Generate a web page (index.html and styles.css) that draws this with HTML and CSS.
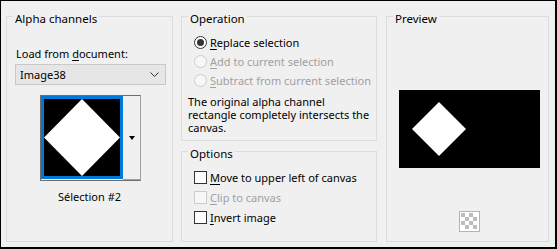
FILE: index.html
```html
<!DOCTYPE html>
<html>
<head>
<meta charset="utf-8">
<link rel="stylesheet" href="styles.css">
</head>
<body>
<div class="dialog">
  <fieldset class="group group-alpha">
    <legend>Alpha channels</legend>
    <div class="load-label">Load from <u>d</u>ocument:</div>
    <div class="combo">
      <span class="combo-text">Image38</span>
      <svg class="chevron" width="9" height="5" viewBox="0 0 9 5"><polyline points="0.5,0.5 4.5,4.5 8.5,0.5" fill="none" stroke="#333" stroke-width="1"/></svg>
    </div>
    <div class="thumb">
      <div class="thumb-img">
        <svg width="76" height="77" viewBox="0 0 76 77"><rect width="76" height="77" fill="#000"/><polygon points="38,0 76,38.5 38,77 0,38.5" fill="#fff"/></svg>
      </div>
      <div class="thumb-btn"><span class="tri"></span></div>
    </div>
    <div class="thumb-name">Sélection #2</div>
  </fieldset>

  <div class="mid-col">
    <fieldset class="group group-op">
      <legend>Operation</legend>
      <div class="choice"><span class="radio checked"></span><span><u>R</u>eplace selection</span></div>
      <div class="choice disabled"><span class="radio"></span><span><u>A</u>dd to current selection</span></div>
      <div class="choice disabled"><span class="radio"></span><span><u>S</u>ubtract from current selection</span></div>
      <p class="desc">The original alpha channel<br>rectangle completely intersects the<br>canvas.</p>
    </fieldset>
    <fieldset class="group group-opt">
      <legend>Options</legend>
      <div class="choice"><span class="check"></span><span><u>M</u>ove to upper left of canvas</span></div>
      <div class="choice disabled"><span class="check"></span><span><u>C</u>lip to canvas</span></div>
      <div class="choice"><span class="check"></span><span><u>I</u>nvert image</span></div>
    </fieldset>
  </div>

  <fieldset class="group group-preview">
    <legend>Preview</legend>
    <div class="preview-img">
      <svg width="141" height="78" viewBox="0 0 141 78"><rect width="141" height="78" fill="#000"/><polygon points="40,12 67,39 40,66 13,39" fill="#fff"/></svg>
    </div>
    <div class="checker">
      <span></span><span></span><span></span><span></span>
      <span></span><span></span><span></span><span></span>
      <span></span><span></span><span></span><span></span>
      <span></span><span></span><span></span><span></span>
    </div>
  </fieldset>
</div>
</body>
</html>
```
FILE: styles.css
```css
html, body {
  margin: 0;
  padding: 0;
  background: #f0f0f0;
}
body {
  font-family: "Segoe UI", "Noto Sans", "Open Sans", sans-serif;
  font-size: 11px;
  line-height: 15px;
  color: #000;
}
.dialog {
  width: 557px;
  height: 249px;
  box-sizing: border-box;
  border: 1px solid #000;
  border-right-width: 2px;
  border-bottom-width: 2px;
  background: #f0f0f0;
  display: flex;
  padding: 6px 6px 5px 5px;
}
.group {
  margin: 0;
  padding: 0;
  min-width: 0;
  border: 1px solid #dcdcdc;
  box-sizing: border-box;
  display: flex;
  flex-direction: column;
}
.group legend {
  margin-left: 6px;
  padding: 4px 2px 0;
  line-height: 15px;
  font-size: 11.5px;
}
.group-alpha {
  width: 167px;
  align-items: flex-start;
}
.load-label {
  margin: 20px 0 0 9px;
}
.combo {
  margin: 3px 0 0 8px;
  width: 151px;
  height: 21px;
  box-sizing: border-box;
  border: 1px solid #c8c8c8;
  background: #e6e6e6;
  display: flex;
  align-items: center;
  justify-content: space-between;
  padding: 0 6px 0 4px;
}
.thumb {
  margin: 10px 0 0 33px;
  width: 101px;
  height: 86px;
  box-sizing: border-box;
  border: 1px solid #6e6e6e;
  border-right-color: #a0a0a0;
  display: flex;
}
.thumb-img {
  width: 82px;
  height: 83px;
  box-sizing: border-box;
  border: 3px solid #0078d7;
  flex: none;
}
.thumb-img svg, .preview-img svg {
  display: block;
}
.thumb-btn {
  flex: 1;
  display: flex;
  justify-content: center;
  align-items: center;
  border-bottom: 1px solid #a0a0a0;
}
.tri {
  width: 0;
  height: 0;
  border-left: 3.5px solid transparent;
  border-right: 3.5px solid transparent;
  border-top: 4px solid #000;
}
.thumb-name {
  align-self: center;
  margin-top: 8px;
}
.mid-col {
  width: 196px;
  margin-left: 8px;
  display: flex;
  flex-direction: column;
}
.group-op {
  height: 134px;
  padding: 7px 0 0 0;
}
.group-opt {
  margin-top: 1px;
  flex: 1;
  padding: 6px 0 0 0;
}
.choice {
  display: flex;
  align-items: center;
  height: 19px;
  gap: 3px;
  white-space: nowrap;
  margin-left: 12px;
}
.group-opt .choice {
  height: 20px;
}
.choice.disabled {
  color: #a0a0a0;
}
.radio {
  width: 13px;
  height: 13px;
  box-sizing: border-box;
  border: 1px solid #333;
  border-radius: 50%;
  background: #fff;
  display: flex;
  align-items: center;
  justify-content: center;
  flex: none;
}
.radio.checked::after {
  content: "";
  width: 7px;
  height: 7px;
  border-radius: 50%;
  background: #333;
}
.disabled .radio, .disabled .check {
  border-color: #cccccc;
  background: #f7f7f7;
}
.check {
  width: 13px;
  height: 13px;
  box-sizing: border-box;
  border: 1px solid #333;
  background: #fff;
  flex: none;
  margin-top: 1px;
}
.desc {
  margin: 5px 0 0 6px;
  line-height: 13px;
  white-space: nowrap;
}
.group-preview {
  width: 163px;
  margin-left: 9px;
  align-items: flex-start;
}
.preview-img {
  margin: 64px 0 0 12px;
}
.checker {
  margin: 43px 0 0 72px;
  width: 21px;
  height: 21px;
  box-sizing: border-box;
  border: 1px solid #b4b4b4;
  padding: 1px;
  display: grid;
  grid-template-columns: repeat(4, 4px);
  grid-template-rows: repeat(4, 4px);
  background: #fff;
}
.checker span:nth-child(8n+1), .checker span:nth-child(8n+3),
.checker span:nth-child(8n+6), .checker span:nth-child(8n+8) {
  background: #bdbdbd;
}
u {
  text-decoration: underline;
  text-underline-offset: 2px;
}
```
